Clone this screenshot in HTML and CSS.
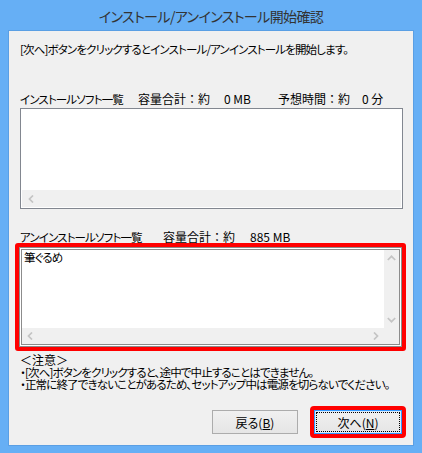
FILE: index.html
```html
<!DOCTYPE html>
<html lang="ja">
<head>
<meta charset="utf-8">
<title>インストール/アンインストール開始確認</title>
<link rel="stylesheet" href="styles.css">
</head>
<body>
<div class="window">
  <div class="titlebar">インストール/アンインストール開始確認</div>
  <div class="client">
    <p class="intro p">[次へ]ボタンをクリックするとインストール/アンインストールを開始します。</p>
    <div class="label label1">
      <span class="c1 p">インストールソフト一覧</span>
      <span class="c2">容量合計：約</span>
      <span class="c3">0 MB</span>
      <span class="c4">予想時間：約</span>
      <span class="c5">0 分</span>
    </div>
    <div class="listbox lb1">
      <div class="lb-body"></div>
      <div class="hscroll">
        <span class="arrow-btn"><svg width="6" height="8" viewBox="0 0 6 8"><path d="M5 0.5 L1.5 4 L5 7.5" fill="none" stroke="#c4c4c4" stroke-width="1.7"/></svg></span>
      </div>
    </div>
    <div class="label label2">
      <span class="d1 p">アンインストールソフト一覧</span>
      <span class="d2">容量合計：約</span>
      <span class="d3">885 MB</span>
    </div>
    <div class="highlight">
      <div class="frame">
        <div class="lb2">
          <div class="lb-body"><div class="item p">筆ぐるめ</div></div>
          <div class="vscroll">
            <span class="arrow-v"><svg width="9" height="6" viewBox="0 0 9 6"><path d="M0.8 5 L4.5 1.3 L8.2 5" fill="none" stroke="#c4c4c4" stroke-width="1.7"/></svg></span>
            <span class="arrow-v"><svg width="9" height="6" viewBox="0 0 9 6"><path d="M0.8 1 L4.5 4.7 L8.2 1" fill="none" stroke="#c4c4c4" stroke-width="1.7"/></svg></span>
          </div>
          <div class="hscroll hs2">
            <span class="arrow-btn"><svg width="6" height="8" viewBox="0 0 6 8"><path d="M5 0.5 L1.5 4 L5 7.5" fill="none" stroke="#c4c4c4" stroke-width="1.7"/></svg></span>
            <span class="arrow-btn"><svg width="6" height="8" viewBox="0 0 6 8"><path d="M1 0.5 L4.5 4 L1 7.5" fill="none" stroke="#c4c4c4" stroke-width="1.7"/></svg></span>
          </div>
          <div class="corner"></div>
        </div>
      </div>
    </div>
    <div class="notes">
      <div>＜注意＞</div>
      <div class="p">・[次へ]ボタンをクリックすると、途中で中止することはできません。</div>
      <div class="p">・正常に終了できないことがあるため、セットアップ中は電源を切らないでください。</div>
    </div>
    <div class="buttons">
      <button class="btn">戻る(<u>B</u>)</button>
      <span class="ring"><button class="btn default">次へ(<u>N</u>)</button></span>
    </div>
  </div>
</div>
</body>
</html>
```

FILE: styles.css
```css
* { box-sizing: border-box; }

body {
  margin: 0;
  font-family: "Noto Sans CJK JP", "Noto Sans", sans-serif;
  font-size: 12px;
  color: #000;
}

.p {
  font-feature-settings: "palt" 1;
  font-size: 11.5px;
  letter-spacing: -0.85px;
}

.window {
  width: 422px;
  height: 453px;
  background: #66aff5;
  padding: 0 8px 7px;
  display: flex;
  flex-direction: column;
}

.titlebar {
  height: 30px;
  line-height: 32px;
  text-align: center;
  font-size: 14px;
  letter-spacing: -0.6px;
  color: #333;
  font-feature-settings: "palt" 1;
}

.client {
  flex: 1;
  background: #f0f0f0;
  border: 1px solid #5a9fe4;
  padding: 12px 11px 0;
}

.intro {
  margin: 0;
  line-height: 12px;
  white-space: nowrap;
}

.label {
  display: flex;
  line-height: 12px;
  white-space: pre;
}
.label1 { margin-top: 38px; }
.label2 { margin-top: 22px; }

.c1 { width: 118px; }
.c2 { width: 86px; }
.c3 { width: 54px; }
.c4 { width: 84px; }
.d1 { width: 143px; }
.d2 { width: 87px; }

.lb1 {
  width: 383px;
  height: 101px;
  margin-top: 3px;
  border: 1px solid #828790;
  padding: 1px;
  background: #fff;
  display: flex;
  flex-direction: column;
}
.lb1 .lb-body { flex: 1; }

.hscroll {
  height: 17px;
  background: #f0f0f0;
  display: flex;
  justify-content: space-between;
}
.arrow-btn {
  width: 17px;
  display: flex;
  align-items: center;
  justify-content: center;
}

.highlight {
  margin-left: -5px;
  width: 391px;
  height: 108px;
  border: 4px solid #f00;
  border-radius: 3px;
}
.frame {
  height: 100%;
  border: 1px solid #8c8c8c;
  padding: 1px;
  background: #fff;
}
.lb2 {
  height: 100%;
  border: 1px solid #8c8c8c;
  background: #fff;
  display: grid;
  grid-template-columns: 1fr 15px;
  grid-template-rows: 1fr 16px;
}
.lb2 .lb-body { padding: 1px 2px; }
.item { line-height: 12px; }

.vscroll {
  background: #f0f0f0;
  display: flex;
  flex-direction: column;
  justify-content: space-between;
}
.arrow-v {
  height: 16px;
  display: flex;
  align-items: center;
  justify-content: center;
}
.hs2 { height: 16px; }
.hs2 .arrow-btn { width: 16px; }
.corner { background: #f0f0f0; }

.notes {
  margin-top: 3px;
  line-height: 12px;
  white-space: nowrap;
}

.buttons {
  margin-top: 16px;
  margin-right: -4px;
  display: flex;
  justify-content: flex-end;
  align-items: center;
  gap: 12px;
}
.btn {
  width: 86px;
  height: 24px;
  padding: 0;
  border: 1px solid #acacac;
  background: linear-gradient(#f0f0f0, #e5e5e5);
  font-family: inherit;
  font-size: 12px;
  color: #000;
  font-feature-settings: "palt" 1;
}
.ring {
  display: flex;
  border: 4px solid #f00;
  border-radius: 4px;
}
.btn.default {
  width: 88px;
  border-color: #3399ff;
  box-shadow: inset 0 0 0 1px #dcecfc;
  outline: 1px dotted #000;
  outline-offset: -3px;
}
```
